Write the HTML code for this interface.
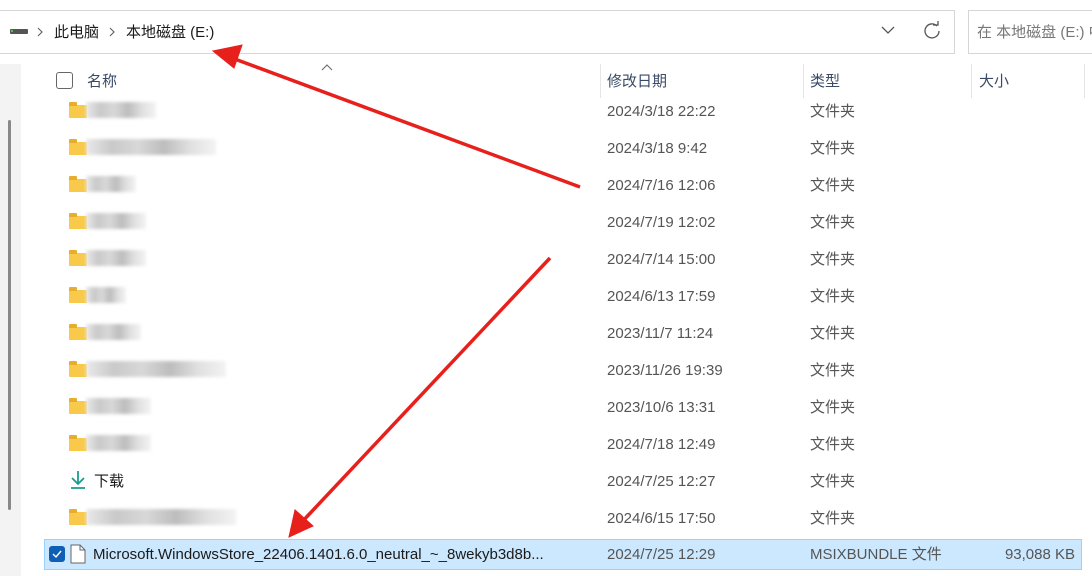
<!DOCTYPE html><html><head><meta charset="utf-8"><style>
body{margin:0;width:1092px;height:576px;overflow:hidden;background:#fff;font-family:"Liberation Sans","Noto Sans CJK SC",sans-serif;position:relative;color:#1a1a1a}
.a{position:absolute}
.t{font-size:15px;line-height:20px;white-space:nowrap}
.g{color:#555}
.blur{position:absolute;height:16px;background:linear-gradient(90deg,#e9e9e9,#c9c9c9,#d8d8d8,#bdbdbd,#e0e0e0,#f3f3f3);filter:blur(1.5px)}
.fold{position:absolute;width:18px;height:13px;background:#f8c94a;border-radius:1px}
.fold:before{content:"";position:absolute;left:0;top:-3px;width:8px;height:4px;background:#e6ae2c;border-radius:1px 1px 0 0}
</style></head><body>
<div class="a" style="left:-1px;top:10px;width:954px;height:42px;border:1px solid #d6d6d6"></div>
<div class="a" style="left:968px;top:10px;width:130px;height:42px;border:1px solid #d6d6d6"></div>
<div class="a" style="left:10px;top:29px;width:18px;height:5px;background:#555;border-radius:1px"></div>
<div class="a" style="left:11px;top:30px;width:2px;height:2px;background:#4c4"></div>
<svg class="a" style="left:36px;top:27px" width="8" height="10"><path d="M2 1l4 4-4 4" fill="none" stroke="#666" stroke-width="1.2"/></svg>
<div class="a t" style="left:54px;top:23px">此电脑</div>
<svg class="a" style="left:108px;top:27px" width="8" height="10"><path d="M2 1l4 4-4 4" fill="none" stroke="#666" stroke-width="1.2"/></svg>
<div class="a t" style="left:126px;top:23px">本地磁盘 (E:)</div>
<svg class="a" style="left:880px;top:24px" width="16" height="12"><path d="M2 3l6 6 6-6" fill="none" stroke="#555" stroke-width="1.3"/></svg>
<svg class="a" style="left:922px;top:21px" width="20" height="20"><path d="M15 5A7 7 0 1 0 17 10" fill="none" stroke="#555" stroke-width="1.3"/><path d="M11 4h5V0" fill="none" stroke="#555" stroke-width="1.3"/></svg>
<div class="a t" style="left:977px;top:23px;color:#777">在 本地磁盘 (E:) 中</div>
<div class="a" style="left:0;top:64px;width:21px;height:512px;background:#f3f3f3"></div>
<div class="a" style="left:8px;top:120px;width:3px;height:390px;background:#888;border-radius:2px"></div>
<div class="a" style="left:56px;top:72px;width:15px;height:15px;border:1px solid #666;border-radius:3px"></div>
<div class="a t" style="left:87px;top:72px;color:#3a4a66">名称</div>
<svg class="a" style="left:321px;top:64px" width="12" height="8"><path d="M1 6l5-5 5 5" fill="none" stroke="#666"/></svg>
<div class="a" style="left:600px;top:64px;width:1px;height:34px;background:#e5e5e5"></div>
<div class="a" style="left:803px;top:64px;width:1px;height:34px;background:#e5e5e5"></div>
<div class="a" style="left:971px;top:64px;width:1px;height:34px;background:#e5e5e5"></div>
<div class="a" style="left:1084px;top:64px;width:1px;height:34px;background:#e5e5e5"></div>
<div class="a t" style="left:607px;top:72px;color:#3a4a66">修改日期</div>
<div class="a t" style="left:810px;top:72px;color:#3a4a66">类型</div>
<div class="a t" style="left:979px;top:72px;color:#3a4a66">大小</div>
<div id="rows"></div>
<div class="a" style="left:44px;top:539px;width:1036px;height:29px;background:#cce8ff;border:1px solid #99d1ff"></div>
<div class="a" style="left:49px;top:546px;width:16px;height:16px;background:#0f5fb5;border-radius:3px"></div>
<svg class="a" style="left:51px;top:548px" width="12" height="12"><path d="M2 6l3 3 5-6" fill="none" stroke="#fff" stroke-width="1.4"/></svg>
<svg class="a" style="left:70px;top:544px" width="16" height="20"><path d="M1 1h9l5 5v13H1z" fill="#fff" stroke="#666"/><path d="M10 1v5h5" fill="none" stroke="#666"/></svg>
<div class="a t" style="left:93px;top:545px">Microsoft.WindowsStore_22406.1401.6.0_neutral_~_8wekyb3d8b...</div>
<div class="a t g" style="left:607px;top:545px">2024/7/25 12:29</div>
<div class="a t g" style="left:810px;top:545px">MSIXBUNDLE 文件</div>
<div class="a t g" style="left:990px;top:545px;width:85px;text-align:right">93,088 KB</div>
<svg class="a" style="left:0;top:0" width="1092" height="576"><g fill="#e8201c" stroke="#e8201c"><path d="M580 187L232 58" stroke-width="3.5"/><path d="M213 51L242 45L234 68z"/><path d="M550 258L300 524" stroke-width="3.5"/><path d="M289 537L295 510L313 526z"/></g></svg>
<script>
var w=[70,130,50,60,60,40,55,140,65,65,0,150];
var dates=["2024/3/18 22:22","2024/3/18 9:42","2024/7/16 12:06","2024/7/19 12:02","2024/7/14 15:00","2024/6/13 17:59","2023/11/7 11:24","2023/11/26 19:39","2023/10/6 13:31","2024/7/18 12:49","2024/7/25 12:27","2024/6/15 17:50"];
var h="";for(var i=0;i<12;i++){var y=110+37*i;
if(i==10){h+='<svg class="a" style="left:69px;top:'+(y-10)+'px" width="18" height="20"><path d="M9 1v12M3 8l6 6 6-6M2 18h14" fill="none" stroke="#1a9c8c" stroke-width="1.8"/></svg><div class="a t" style="left:94px;top:'+(y-8)+'px">下载</div>';}
else{h+='<div class="fold" style="left:69px;top:'+(y-5)+'px"></div><div class="blur" style="left:86px;top:'+(y-8)+'px;width:'+w[i]+'px"></div>';}
h+='<div class="a t g" style="left:607px;top:'+(y-8)+'px">'+dates[i]+'</div><div class="a t g" style="left:810px;top:'+(y-8)+'px">文件夹</div>';}
document.getElementById("rows").innerHTML=h;
</script>
</body></html>
